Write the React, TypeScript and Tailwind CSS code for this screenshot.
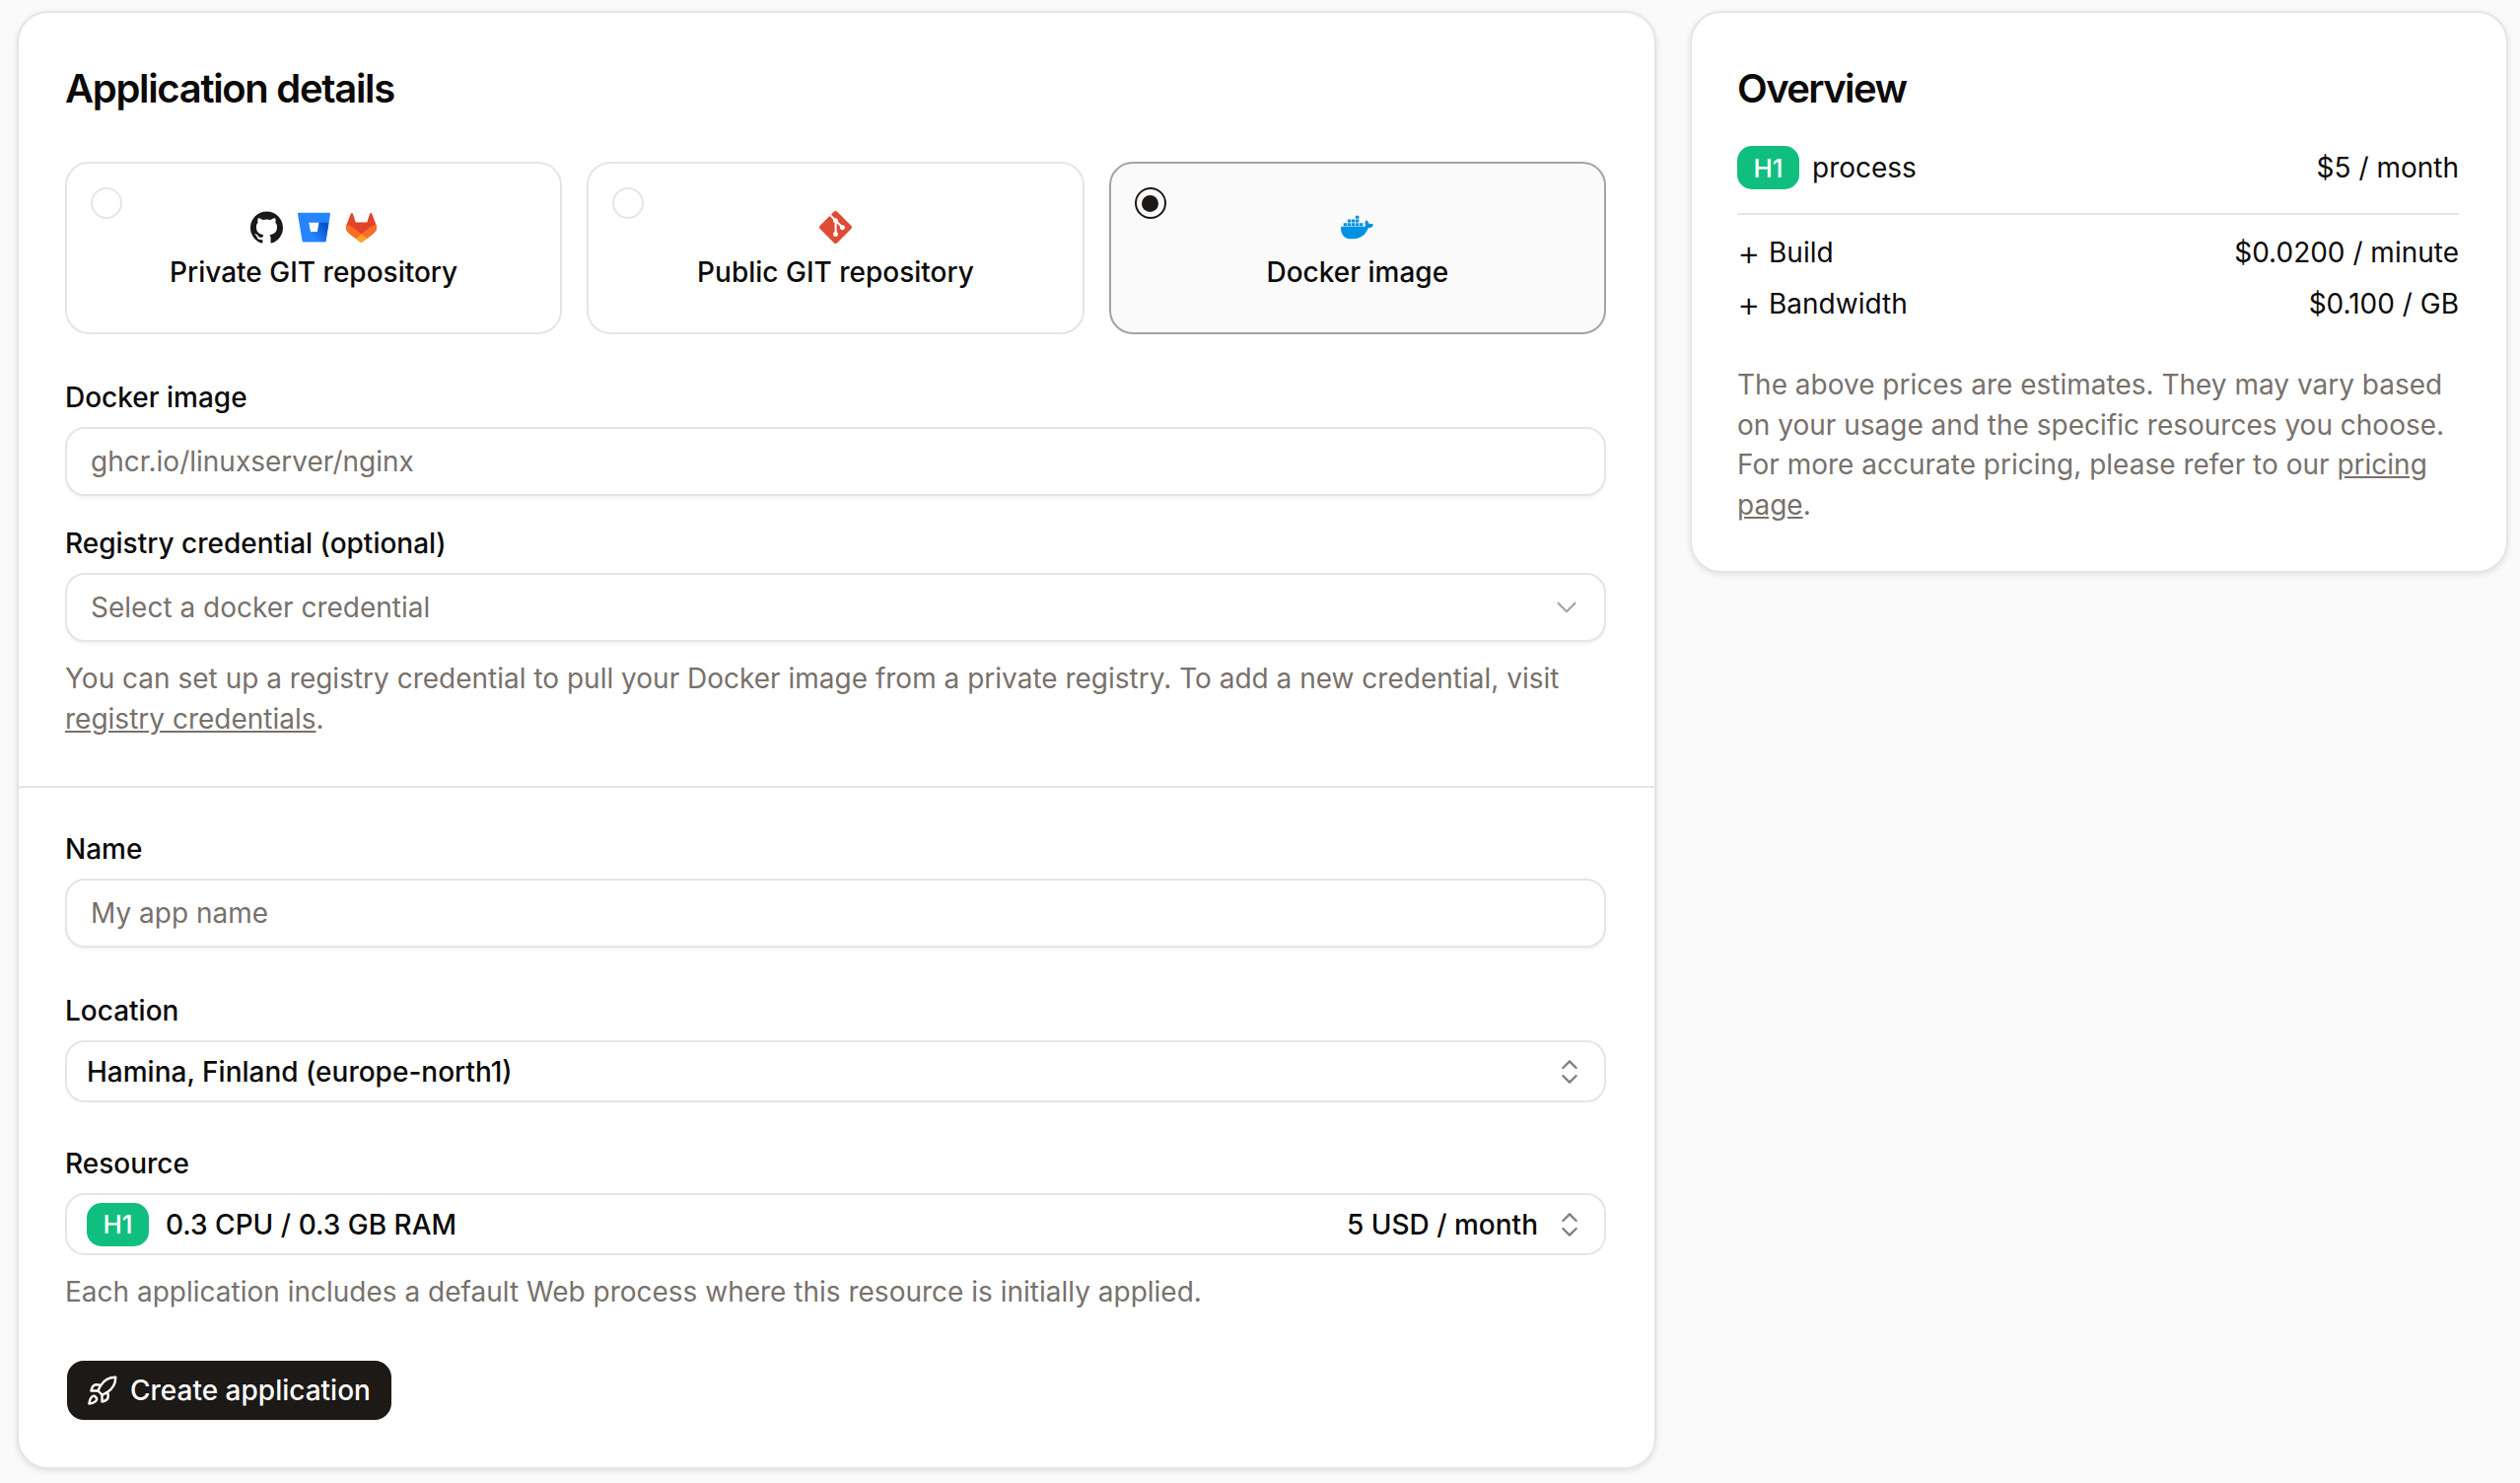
import { ChevronDown, ChevronsUpDown, Rocket } from "lucide-react";
import { SiDocker, SiGit, SiGithub } from "react-icons/si";

const BitbucketLogo = () => (
  <svg viewBox="0 0 24 24" className="w-[33px] h-[33px]">
    <defs>
      <linearGradient id="bb" x1="24" y1="10" x2="12" y2="20" gradientUnits="userSpaceOnUse">
        <stop offset="0.18" stopColor="#0052cc" />
        <stop offset="1" stopColor="#2684ff" />
      </linearGradient>
    </defs>
    <path fill="#2684ff" d="M.778 1.213a.768.768 0 00-.768.892l3.263 19.81c.084.5.515.868 1.022.873H19.95a.772.772 0 00.77-.646l3.27-20.03a.768.768 0 00-.768-.891zM14.52 15.53H9.522L8.17 8.466h7.561z" />
    <path fill="url(#bb)" d="M22.95 8.466h-7.22l-1.21 7.064H9.522L3.6 22.55a1.05 1.05 0 00.68.26h15.67a.77.77 0 00.77-.65z" />
  </svg>
);

const GitlabLogo = () => (
  <svg viewBox="107 110 166 156" className="w-[33px] h-[31px]">
    <path fill="#e24329" d="M265.26 174.37l-.21-.56-21.2-55.31a5.5 5.5 0 00-2.18-2.63 5.6 5.6 0 00-6.53.35 5.6 5.6 0 00-1.87 2.85l-14.31 43.81h-57.91l-14.31-43.81a5.5 5.5 0 00-1.87-2.85 5.6 5.6 0 00-6.53-.35 5.5 5.5 0 00-2.18 2.63l-21.2 55.31-.21.56a39.4 39.4 0 0013.06 45.48l.08.06.19.14 32.29 24.17 15.97 12.09 9.72 7.35a6.6 6.6 0 007.92 0l9.72-7.35 15.97-12.09 32.48-24.31.09-.07a39.4 39.4 0 0013.05-45.48z" />
    <path fill="#fc6d26" d="M265.26 174.37l-.21-.56a71.6 71.6 0 00-28.97 13.02l-46.5 35.16c15.84 11.98 29.62 22.39 29.62 22.39l32.48-24.31.09-.07a39.4 39.4 0 0012.49-45.63z" />
    <path fill="#fca326" d="M160.3 244.03l15.97 12.09 9.72 7.35a6.6 6.6 0 007.92 0l9.72-7.35 15.97-12.09s-13.78-10.44-29.62-22.39c-15.84 11.95-29.68 22.39-29.68 22.39z" />
    <path fill="#fc6d26" d="M143.47 186.83a71.6 71.6 0 00-28.97-13.02l-.21.56a39.4 39.4 0 0013.06 45.48l.08.06.19.14 32.29 24.17s13.84-10.44 29.68-22.39z" />
  </svg>
);

const H1Badge = () => (
  <span className="flex items-center justify-center w-[63px] h-[44px] rounded-[15px] bg-[#10bf80] text-white text-[26px] font-medium">
    H1
  </span>
);

const Label = ({ children }: { children: string }) => (
  <label className="block h-[40px] leading-[40px] text-[28px] font-medium text-[#0c0a09]">{children}</label>
);

const Input = ({ placeholder }: { placeholder: string }) => (
  <input
    className="mt-[10px] block w-full h-[70px] px-[24px] rounded-[20px] border-2 border-[#e7e5e4] bg-white text-[28px] text-[#0c0a09] placeholder:text-[#78716c] shadow-[0_2px_3px_rgba(0,0,0,0.05)] outline-none"
    placeholder={placeholder}
    readOnly
  />
);

const Option = ({ name, selected, children }: { name: string; selected?: boolean; children: React.ReactNode }) => (
  <div className={`relative flex-1 h-[175px] rounded-[24px] border-2 flex flex-col items-center pt-[48px] ${selected ? "border-[#a8a29e] bg-[#fafafa]" : "border-[#e7e5e4] bg-white"}`}>
    {selected ? (
      <span className="absolute left-[24px] top-[24px] w-[32px] h-[32px] rounded-full border-2 border-[#1c1917] flex items-center justify-center">
        <span className="w-[17px] h-[17px] rounded-full bg-[#1c1917]" />
      </span>
    ) : (
      <span className="absolute left-[24px] top-[24px] w-[32px] h-[32px] rounded-full border-2 border-[#e7e5e4] bg-white" />
    )}
    <div className="flex items-center justify-center gap-[15px] h-[33px]">{children}</div>
    <span className="mt-[9px] h-[40px] leading-[40px] text-[28px] font-medium text-[#0c0a09]">{name}</span>
  </div>
);

const PriceRow = ({ name, price }: { name: string; price: string }) => (
  <div className="flex justify-between h-[52px] leading-[52px] text-[28px] text-[#0c0a09]">
    <span className="flex">
      <span className="w-[32px] text-[36px] font-light">+</span>
      {name}
    </span>
    <span>{price}</span>
  </div>
);

export default function App() {
  return (
    <div className="min-h-screen bg-[#fafafa] flex items-start gap-[34px] pl-[17px] pr-[12px] pt-[11px] font-['Inter',sans-serif]">
      <main className="w-[1663px] shrink-0 bg-white rounded-[32px] border-2 border-[#e7e5e4] shadow-[0_2px_6px_rgba(0,0,0,0.1)]">
        <div className="pl-[47px] pr-[49px] pt-[47px] pb-[48px]">
          <h1 className="h-[60px] leading-[60px] text-[40px] font-semibold tracking-[-0.033em] text-[#0c0a09]">Application details</h1>

          <div className="flex gap-[25px] mt-[44px]">
            <Option name="Private GIT repository">
              <SiGithub className="w-[33px] h-[33px] text-[#1b1817]" />
              <BitbucketLogo />
              <GitlabLogo />
            </Option>
            <Option name="Public GIT repository">
              <SiGit className="w-[33px] h-[33px] text-[#de4c36]" />
            </Option>
            <Option name="Docker image" selected>
              <SiDocker className="w-[33px] h-[33px] text-[#0091e2]" />
            </Option>
          </div>

          <div className="mt-[44px]">
            <Label>Docker image</Label>
            <Input placeholder="ghcr.io/linuxserver/nginx" />
          </div>

          <div className="mt-[28px]">
            <Label>Registry credential (optional)</Label>
            <div className="mt-[10px] flex items-center justify-between h-[70px] pl-[24px] pr-[21px] rounded-[20px] border-2 border-[#e7e5e4] bg-white text-[28px] text-[#78716c] shadow-[0_2px_3px_rgba(0,0,0,0.05)]">
              <span>Select a docker credential</span>
              <ChevronDown className="w-[34px] h-[34px] text-[#a8a29e]" strokeWidth={1.5} />
            </div>
            <p className="mt-[17px] text-[28px] leading-[40.5px] text-[#78716c]">
              You can set up a registry credential to pull your Docker image from a private registry. To add a new credential, visit <a className="underline">registry credentials</a>.
            </p>
          </div>
        </div>

        <div className="border-t-2 border-[#e7e5e4] pl-[47px] pr-[49px] pt-[42px] pb-[48px]">
          <Label>Name</Label>
          <Input placeholder="My app name" />

          <div className="mt-[44px]">
            <Label>Location</Label>
            <div className="mt-[10px] flex items-center justify-between h-[63px] pl-[20px] pr-[19px] rounded-[20px] border-2 border-[#e7e5e4] bg-white text-[28px] font-medium text-[#0c0a09]">
              <span>Hamina, Finland (europe-north1)</span>
              <ChevronsUpDown className="w-[32px] h-[32px] text-[#808080]" strokeWidth={1.75} />
            </div>
          </div>

          <div className="mt-[42px]">
            <Label>Resource</Label>
            <div className="mt-[10px] flex items-center h-[63px] pl-[20px] pr-[19px] rounded-[20px] border-2 border-[#e7e5e4] bg-white text-[28px] font-medium text-[#0c0a09]">
              <H1Badge />
              <span className="ml-[17px]">0.3 CPU / 0.3 GB RAM</span>
              <span className="ml-auto mr-[16px]">5 USD / month</span>
              <ChevronsUpDown className="w-[32px] h-[32px] text-[#808080]" strokeWidth={1.75} />
            </div>
          </div>

          <p className="mt-[17px] text-[28px] leading-[40px] text-[#78716c]">
            Each application includes a default Web process where this resource is initially applied.
          </p>

          <button className="mt-[50px] ml-[2px] flex items-center gap-[12px] h-[60px] pl-[19px] pr-[21px] rounded-[17px] bg-[#1c1917] text-white text-[28px] font-medium">
            <Rocket className="w-[33px] h-[33px]" strokeWidth={1.75} />
            Create application
          </button>
        </div>
      </main>

      <aside className="w-[830px] shrink-0 bg-white rounded-[32px] border-2 border-[#e7e5e4] shadow-[0_2px_6px_rgba(0,0,0,0.1)] pl-[46px] pr-[48px] pt-[47px] pb-[47px]">
        <h2 className="h-[60px] leading-[60px] text-[40px] font-semibold tracking-[-0.04em] text-[#0c0a09]">Overview</h2>
        <div className="flex items-center justify-between mt-[28px] text-[28px] text-[#0c0a09]">
          <div className="flex items-center gap-[13px]">
            <H1Badge />
            <span>process</span>
          </div>
          <span>$5 / month</span>
        </div>
        <div className="mt-[24px] border-t-2 border-[#e7e5e4]" />
        <div className="mt-[12px]">
          <PriceRow name="Build" price="$0.0200 / minute" />
          <PriceRow name="Bandwidth" price="$0.100 / GB" />
        </div>
        <p className="mt-[36px] text-[28px] leading-[40.5px] text-[#78716c]">
          The above prices are estimates. They may vary based on your usage and the specific resources you choose. For more accurate pricing, please refer to our <a className="underline">pricing page</a>.
        </p>
      </aside>
    </div>
  );
}
